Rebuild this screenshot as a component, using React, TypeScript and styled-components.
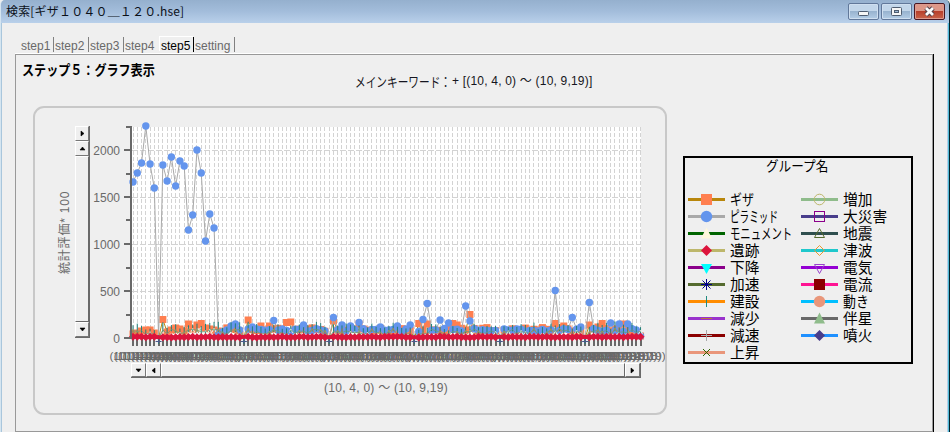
import React from "react";
import styled, { createGlobalStyle } from "styled-components";

const Global = createGlobalStyle`
  * { box-sizing: border-box; }
  body { margin: 0; background: #efefef; overflow: hidden; }
`;

const LATIN = '"Liberation Sans", "Noto Sans CJK JP", sans-serif';
const JP = '"Noto Sans CJK JP", sans-serif';

const Window = styled.div`
  width: 950px;
  height: 432px;
  display: flex;
  flex-direction: column;
  background: #efefef;
  border-left: 1px solid #d5e5f0;
  border-right: 1px solid #06222c;
  border-top-left-radius: 5px;
  border-top-right-radius: 5px;
  box-shadow: inset 1px 0 #a9c6dc, inset -1px 0 #52bcd6, inset -2px 0 #b5d0ea;
  font: 12px/14px ${LATIN};
  overflow: hidden;
`;

const TitleBar = styled.header`
  flex: none;
  height: 23px;
  display: flex;
  align-items: center;
  justify-content: space-between;
  padding: 0 4px 0 5px;
  background: linear-gradient(#95b0ce, #a3bddb 50%, #b9d0ea);
`;

const Title = styled.h1`
  margin: 0 0 1px;
  font: 400 12px/18px ${JP};
  letter-spacing: 0.18px;
  color: #0b1018;
`;

const WindowButtons = styled.div`
  display: flex;
  gap: 2px;
`;

const WindowButton = styled.button<{ $close?: boolean }>`
  width: 31px;
  height: 17px;
  padding: 0;
  display: flex;
  align-items: center;
  justify-content: center;
  border: 1px solid ${(p) => (p.$close ? "#4a1722" : "#61789a")};
  border-radius: 2px;
  box-shadow: inset 0 0 0 1px ${(p) => (p.$close ? "#dc9a8e" : "#cfdff0")};
  background: ${(p) =>
    p.$close
      ? "linear-gradient(#dd9788 0 45%, #b8402c 50%, #c9634a)"
      : "linear-gradient(#c2d6ea 0 45%, #98b3cf 50%, #b4cde6)"};
`;

const Tabs = styled.nav`
  flex: none;
  height: 31px;
  margin: 0 16px 0 14px;
  padding: 14px 0 0 5px;
  display: flex;
  border-bottom: 1px solid #fff;
`;

const Tab = styled.span<{ $active?: boolean; $bar?: boolean; $w: number }>`
  width: ${(p) => p.$w}px;
  height: 15px;
  padding-left: 1px;
  line-height: 19px;
  color: ${(p) => (p.$active ? "#000" : "#696969")};
  border-right: ${(p) => (p.$bar ? `1px solid ${p.$active ? "#000" : "#808080"}` : "0")};
  ${(p) => p.$active && "box-shadow: -1px -1px #fff;"}
`;

const Panel = styled.main`
  flex: 1;
  margin: 0 16px 0 14px;
  display: flex;
  flex-direction: column;
  border: 1px solid #999;
  box-shadow: 1px 0 #000;
`;

const Header = styled.div`
  flex: none;
  height: 51px;
  display: flex;
  padding-left: 6px;
`;

const StepTitle = styled.h2`
  width: 333px;
  margin: 4px 0 0;
  font: 700 14px/20px ${JP};
  color: #000;
`;

const Keyword = styled.div`
  display: flex;
  align-items: center;
  height: 18px;
  margin-top: 17px;
  color: #151520;
  letter-spacing: 0.2px;
  white-space: nowrap;
`;

const Squeezed = styled.span<{ $w: number; $scale: number; $size: number }>`
  display: inline-block;
  width: ${(p) => p.$w}px;
  transform: scaleX(${(p) => p.$scale});
  transform-origin: 0 50%;
  font: inherit;
  font-family: ${JP};
  font-size: ${(p) => p.$size}px;
  letter-spacing: 0;
  white-space: nowrap;
`;

const Content = styled.div`
  display: flex;
  align-items: flex-start;
  padding-left: 17px;
`;

const ChartFrame = styled.section`
  flex: none;
  width: 634px;
  height: 309px;
  border: 2px solid #c8c8c8;
  border-radius: 11px;
  padding-top: 10px;
`;

const ChartRow = styled.div`
  display: flex;
  height: 245px;
  padding-left: 20px;
`;

const AxisTitle = styled.div`
  width: 20px;
  height: 229px;
  display: flex;
  align-items: center;
  justify-content: center;
  writing-mode: vertical-rl;
  text-orientation: sideways;
  transform: rotate(180deg);
  color: #696969;
  line-height: 20px;
  letter-spacing: 0.8px;
  white-space: nowrap;
`;

const ScrollBar = styled.div<{ $vertical?: boolean }>`
  display: flex;
  flex-direction: ${(p) => (p.$vertical ? "column" : "row")};
  width: ${(p) => (p.$vertical ? 15 : 510)}px;
  height: ${(p) => (p.$vertical ? 212 : 15)}px;
  margin: ${(p) => (p.$vertical ? "8px 0 0" : "0 0 0 96px")};
  background: #efefef;
  border-right: 1px solid #696969;
  border-bottom: 1px solid #696969;
`;

const ScrollButton = styled.button<{ $vertical?: boolean }>`
  flex: none;
  width: ${(p) => (p.$vertical ? 14 : 15)}px;
  height: ${(p) => (p.$vertical ? 15 : 14)}px;
  padding: 0;
  display: flex;
  align-items: center;
  justify-content: center;
  background: #efefef;
  border: 1px solid #fff;
  border-right-color: #777;
  border-bottom-color: #777;
`;

const ScrollThumb = styled.div`
  flex: 1;
  border: 1px solid #fff;
  border-right-color: #696969;
  border-bottom-color: #696969;
`;

const RangeLabel = styled.div`
  width: 510px;
  margin: 1px 0 0 96px;
  height: 18px;
  line-height: 18px;
  text-align: center;
  letter-spacing: 0.25px;
  color: #696969;
`;

const Legend = styled.aside`
  width: 230px;
  height: 208px;
  margin: 50px 0 0 16px;
  border: 2px solid #000;
  padding-left: 3px;
  color: #000;
`;

const LegendTitle = styled.div`
  height: 33px;
  font: 14px/14px ${JP};
  text-align: center;
  padding-right: 7px;
`;

const LegendColumns = styled.div`
  display: grid;
  grid-template-columns: 113px 1fr;
`;

const LegendItem = styled.div`
  display: flex;
  align-items: center;
  height: 17px;
  gap: 5px;
  font-size: 15px;
  line-height: 15px;
`;

const LegendName = styled.div`
  height: 17px;
`;

type Dir = "up" | "down" | "left" | "right";
const arrows: Record<Dir, string> = {
  up: "M1 5 L3.5 2 L6 5Z",
  down: "M1 2 L6 2 L3.5 5Z",
  left: "M5 1 L5 6 L2 3.5Z",
  right: "M2 1 L5 3.5 L2 6Z",
};

const Arrow = ({ dir, vertical }: { dir: Dir; vertical?: boolean }) => (
  <ScrollButton $vertical={vertical} aria-label={dir}>
    <svg width="7" height="7">
      <path d={arrows[dir]} fill="#000" stroke="#000" strokeWidth="0.6" />
    </svg>
  </ScrollButton>
);

// Chart geometry: 120 dates across the plot, 500 units per 47px.
const COUNT = 120;
const xAt = (i: number) => 133 + i * 4.265;
const isGap = (i: number) => i % 20 === 6;
const noise = (i: number, k: number) => {
  const v = Math.sin(i * 12.9898 + k * 78.233) * 43758.5453;
  return v - Math.floor(v);
};

const pyramidPeaks: Record<number, number> = {
  0: 182, 1: 173, 2: 163, 3: 126, 4: 164, 5: 188, 7: 165, 8: 181, 9: 157, 10: 186,
  11: 161, 12: 166, 13: 230, 14: 215, 15: 150, 16: 173, 17: 241, 18: 214, 19: 228,
  20: 333, 21: 332, 22: 330, 23: 326, 24: 324, 25: 330, 28: 327, 33: 320.5, 40: 325,
  47: 317.5, 49: 325, 51: 326, 53: 322.5, 58: 327, 62: 326, 65: 325, 68: 319.5,
  69: 303.5, 72: 320, 74: 323, 78: 306, 79: 321, 99: 290.5, 103: 317.5, 105: 327,
  107: 302.5, 112: 323, 114: 324, 116: 324, 118: 330, 119: 336,
};
const gizaPeaks: Record<number, number> = {
  0: 334, 1: 333, 2: 331, 3: 330, 4: 330, 5: 333,
  7: 319.5, 8: 332, 9: 330, 10: 328, 11: 329, 12: 331, 13: 324, 14: 329, 15: 325, 16: 323.5,
  17: 328, 18: 329, 19: 330, 20: 331, 21: 332,
  27: 320, 30: 326, 32: 326, 36: 322.5, 37: 322,
  47: 321, 53: 324, 67: 323.5, 69: 324, 75: 323.5, 76: 325, 79: 314.5, 99: 323.5,
  101: 326, 107: 325, 109: 327, 110: 323.5, 115: 324, 117: 331, 118: 334, 119: 336,
};
const indexes = Array.from({ length: COUNT }, (_, i) => i);
const pyramid = indexes.map((i) => (isGap(i) ? 338 : pyramidPeaks[i] ?? 328.5 + noise(i, 1) * 3));
const giza = indexes.map((i) => (isGap(i) ? 338 : gizaPeaks[i] ?? 327.5 + noise(i, 2) * 4));
const construction = indexes.map((i) => (isGap(i) ? 338 : 325 + noise(i, 3) * 6));
const increase = indexes.map((i) => (isGap(i) ? 338 : 328 + noise(i, 4) * 7));
const ruins = indexes.map((i) => 336.6 + noise(i, 5) * 0.8);
const line = (ys: number[]) => ys.map((y, i) => `${xAt(i)},${y}`).join(" ");
const dateLabel = (i: number) =>
  `(10,${String(4 + Math.floor(i / 20)).padStart(2, "\u00a0")},${String(i % 20).padStart(2, "\u00a0")})`;

const Chart = () => (
  <svg width="575" height="245" viewBox="90 118 575 245" fontFamily={LATIN} fontSize="12">
    <rect x="131" y="127" width="510" height="211" fill="#fff" />
    <g stroke="#d3d3d3" strokeDasharray="4 2" shapeRendering="crispEdges">
      {indexes.map((i) => (
        <line key={i} x1={xAt(i)} x2={xAt(i)} y1="127" y2="338" />
      ))}
      {[150.5, 197.5, 244.5, 291.5].map((y) => (
        <line key={y} x1="132" x2="641" y1={y} y2={y} strokeDasharray="6 2" />
      ))}
    </g>
    <g stroke="#696969" shapeRendering="crispEdges">
      {indexes.map((i) => (
        <line key={i} x1={xAt(i)} x2={xAt(i)} y1="338" y2="346" strokeWidth="2" />
      ))}
    </g>
    <g fill="none" strokeWidth="1">
      <polyline points={line(increase)} stroke="#bdb76b" />
      <polyline points={line(giza)} stroke="#b8860b" />
      {giza.map((y, i) => !isGap(i) && (
        <rect key={i} x={xAt(i) - 3.5} y={y - 3.5} width="7" height="7" fill="#ff7f50" />
      ))}
      <polyline points={line(pyramid)} stroke="#a9a9a9" />
      {pyramid.map((y, i) => !isGap(i) && (
        <circle key={i} cx={xAt(i)} cy={y} r="3.7" fill="#6495ed" />
      ))}
      {construction.map((y, i) => (
        <g key={i}>
          <path d={`M${xAt(i)} ${y - 4 * noise(i, 8)}V${y + 6}`} stroke="#207f78" />
          {noise(i, 6) > 0.45 && !isGap(i) && (
            <path
              d={`M${xAt(i) - 2} ${y + 7}L${xAt(i)} ${y + 3}L${xAt(i) + 2} ${y + 7}`}
              stroke={noise(i, 7) > 0.7 ? "#eef2e6" : "#c08a48"}
            />
          )}
        </g>
      ))}
      <polyline points={line(construction.map((y) => Math.min(338, y + 4)))} stroke="#6e9b78" strokeWidth="0.8" />
      {indexes.filter(isGap).map((i) => (
        <path key={i} d={`M${xAt(i) - 3} 341.5H${xAt(i) + 3}M${xAt(i)} 335V343`} stroke="#4c5a8c" />
      ))}
      <polyline points={line(ruins)} stroke="#dc143c" strokeWidth="4" />
      {ruins.map((y, i) => !isGap(i) && (
        <path key={i} d={`M${xAt(i)} ${y - 4}l4 4l-4 4l-4 -4Z`} fill="#dc143c" />
      ))}
    </g>
    <g stroke="#696969" strokeWidth="2" shapeRendering="crispEdges">
      <path d="M131 126V339M124 150H131M124 197H131M124 244H131M124 291H131M124 338H131" />
      <path d="M126 127H131M126 174H131M126 220H131M126 268H131M126 315H131" />
    </g>
    <g fill="#696969" textAnchor="end">
      {[2000, 1500, 1000, 500, 0].map((v, i) => (
        <text key={v} x="120" y={155 + i * 47}>{v}</text>
      ))}
    </g>
    <g fill="#696969" textAnchor="middle" fontSize="11.8">
      {indexes.map((i) => (
        <text key={i} x={xAt(i)} y="360">{dateLabel(i)}</text>
      ))}
    </g>
  </svg>
);

type Shape =
  | "square" | "circle" | "triangle" | "diamond" | "down" | "star"
  | "vbar" | "hbar" | "plus" | "cross";

const filledShapes: Partial<Record<Shape, React.ReactNode>> = {
  square: <rect x="13" y="3" width="11" height="11" />,
  circle: <circle cx="18.5" cy="8.5" r="5.7" />,
  triangle: <path d="M18.5 2.5L24 13.5H13Z" />,
  diamond: <path d="M18.5 3L24 8.5L18.5 14L13 8.5Z" />,
  down: <path d="M18.5 15L13 5H24Z" />,
};

const outlineShapes: Record<Shape, React.ReactNode> = {
  square: <rect x="13.5" y="3.5" width="10" height="10" />,
  circle: <circle cx="18.5" cy="8.5" r="5.3" />,
  triangle: <path d="M18.5 3.5L23.5 12.5H13.5Z" />,
  diamond: <path d="M18.5 3.5L23.5 8.5L18.5 13.5L13.5 8.5Z" />,
  down: <path d="M18.5 14.5L13.5 5.5H23.5Z" />,
  star: <path d="M18.5 3V14M13 8.5H24M14.5 4.5L22.5 12.5M22.5 4.5L14.5 12.5" />,
  vbar: <path d="M18.5 3V14" />,
  hbar: <path d="M13 8.5H24" />,
  plus: <path d="M18.5 3V14M13 8.5H24" />,
  cross: <path d="M15 5L22 12M22 5L15 12" />,
};

type Entry = { name: string; scale?: number; line: string; shape: Shape; color: string; open?: boolean };

const leftEntries: Entry[] = [
  { name: "ギザ", scale: 0.8, line: "#b8860b", shape: "square", color: "#ff7f50" },
  { name: "ピラミッド", scale: 0.64, line: "#a9a9a9", shape: "circle", color: "#6495ed" },
  { name: "モニュメント", scale: 0.69, line: "#006400", shape: "triangle", color: "#fff8dc" },
  { name: "遺跡", line: "#bdb76b", shape: "diamond", color: "#dc143c" },
  { name: "下降", line: "#8b008b", shape: "down", color: "#00ffff" },
  { name: "加速", line: "#556b2f", shape: "star", color: "#00008b", open: true },
  { name: "建設", line: "#ff8c00", shape: "vbar", color: "#208b80", open: true },
  { name: "減少", line: "#9932cc", shape: "hbar", color: "#b8763c", open: true },
  { name: "減速", line: "#8b0000", shape: "plus", color: "#a9a9a9", open: true },
  { name: "上昇", line: "#e9967a", shape: "cross", color: "#2f6400", open: true },
];
const rightEntries: Entry[] = [
  { name: "増加", line: "#8fbc8b", shape: "circle", color: "#bdb76b", open: true },
  { name: "大災害", line: "#483d8b", shape: "square", color: "#8b008b", open: true },
  { name: "地震", line: "#2f4f4f", shape: "triangle", color: "#556b2f", open: true },
  { name: "津波", line: "#1fc8cc", shape: "diamond", color: "#e89830", open: true },
  { name: "電気", line: "#9400d3", shape: "down", color: "#9942cc", open: true },
  { name: "電流", line: "#ff1493", shape: "square", color: "#8b0000" },
  { name: "動き", scale: 0.86, line: "#00bfff", shape: "circle", color: "#e9967a" },
  { name: "伴星", line: "#696969", shape: "triangle", color: "#8fbc8b" },
  { name: "噴火", line: "#1e90ff", shape: "diamond", color: "#483d8b" },
];

const LegendList = ({ entries }: { entries: Entry[] }) => (
  <div>
    {entries.map((e) => (
      <LegendItem key={e.name}>
        <svg width="37" height="17">
          <rect x="0" y="7" width="37" height="3" fill={e.line} />
          <g fill={e.open ? "none" : e.color} stroke={e.open ? e.color : "none"}>
            {e.open ? outlineShapes[e.shape] : filledShapes[e.shape]}
          </g>
        </svg>
        <LegendName>
          <Squeezed $w={66} $scale={e.scale ?? 0.98} $size={15}>{e.name}</Squeezed>
        </LegendName>
      </LegendItem>
    ))}
  </div>
);

export default function App() {
  return (
    <>
      <Global />
      <Window>
        <TitleBar>
          <Title>検索[ギザ１０４０＿１２０.hse]</Title>
          <WindowButtons>
            <WindowButton aria-label="minimize">
              <svg width="13" height="11">
                <rect x="1.5" y="5.5" width="10" height="4" rx="1" fill="#f6f6f6" stroke="#4f5d70" />
              </svg>
            </WindowButton>
            <WindowButton aria-label="maximize">
              <svg width="13" height="11">
                <rect x="1.5" y="1.5" width="10" height="8" rx="1" fill="#f6f6f6" stroke="#4f5d70" />
                <rect x="4.5" y="4.5" width="4" height="2" fill="#9db8d4" stroke="#4f5d70" />
              </svg>
            </WindowButton>
            <WindowButton $close aria-label="close">
              <svg width="13" height="11">
                <path d="M3 2L10 9M10 2L3 9" stroke="#54414a" strokeWidth="4.6" />
                <path d="M3 2L10 9M10 2L3 9" stroke="#fafafa" strokeWidth="2.7" />
              </svg>
            </WindowButton>
          </WindowButtons>
        </TitleBar>
        <Tabs>
          <Tab $w={34} $bar>step1</Tab>
          <Tab $w={35} $bar>step2</Tab>
          <Tab $w={35} $bar>step3</Tab>
          <Tab $w={36}>step4</Tab>
          <Tab $w={34} $bar $active>step5</Tab>
          <Tab $w={41} $bar>setting</Tab>
        </Tabs>
        <Panel>
          <Header>
            <StepTitle>
              <Squeezed $w={140} $scale={0.862} $size={14}>ステップ５：グラフ表示</Squeezed>
            </StepTitle>
            <Keyword>
              <Squeezed $w={97} $scale={0.79} $size={13.5}>メインキーワード：</Squeezed>
              + [(10, 4, 0) ～ (10, 9,19)]
            </Keyword>
          </Header>
          <Content>
            <ChartFrame>
              <ChartRow>
                <AxisTitle>統計評価* 100</AxisTitle>
                <ScrollBar $vertical>
                  <Arrow dir="right" vertical />
                  <Arrow dir="up" vertical />
                  <ScrollThumb />
                  <Arrow dir="down" vertical />
                </ScrollBar>
                <Chart />
              </ChartRow>
              <ScrollBar>
                <Arrow dir="down" />
                <Arrow dir="left" />
                <ScrollThumb />
                <Arrow dir="right" />
              </ScrollBar>
              <RangeLabel>(10, 4, 0) ～ (10, 9,19)</RangeLabel>
            </ChartFrame>
            <Legend>
              <LegendTitle>
                <Squeezed $w={60} $scale={0.9} $size={14}>グループ名</Squeezed>
              </LegendTitle>
              <LegendColumns>
                <LegendList entries={leftEntries} />
                <LegendList entries={rightEntries} />
              </LegendColumns>
            </Legend>
          </Content>
        </Panel>
      </Window>
    </>
  );
}
